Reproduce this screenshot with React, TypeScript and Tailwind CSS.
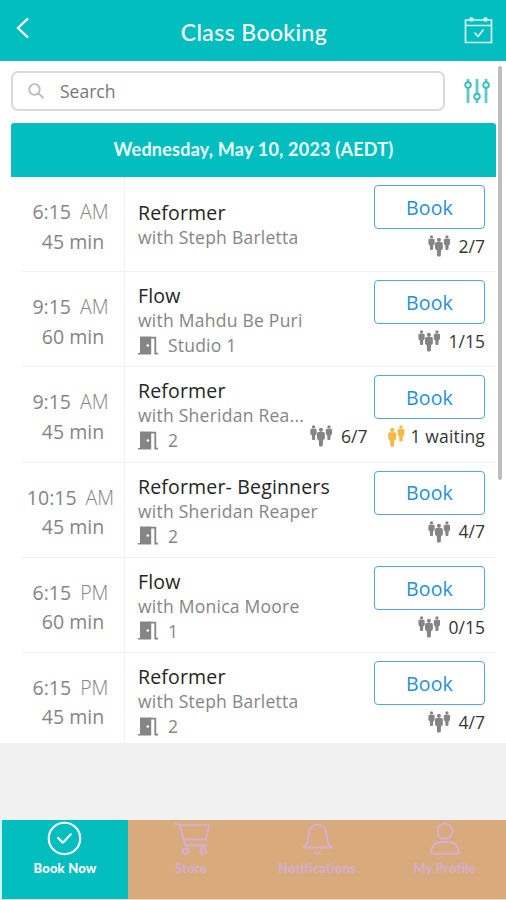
type ClassItem = {
    time: string;
    period: string;
    length: string;
    name: string;
    teacher: string;
    room?: string;
    count: string;
    waiting?: string;
};

const classes: ClassItem[] = [
    { time: "6:15", period: "AM", length: "45 min", name: "Reformer", teacher: "with Steph Barletta", count: "2/7" },
    { time: "9:15", period: "AM", length: "60 min", name: "Flow", teacher: "with Mahdu Be Puri", room: "Studio 1", count: "1/15" },
    { time: "9:15", period: "AM", length: "45 min", name: "Reformer", teacher: "with Sheridan Rea...", room: "2", count: "6/7", waiting: "1 waiting" },
    { time: "10:15", period: "AM", length: "45 min", name: "Reformer- Beginners", teacher: "with Sheridan Reaper", room: "2", count: "4/7" },
    { time: "6:15", period: "PM", length: "60 min", name: "Flow", teacher: "with Monica Moore", room: "1", count: "0/15" },
    { time: "6:15", period: "PM", length: "45 min", name: "Reformer", teacher: "with Steph Barletta", room: "2", count: "4/7" },
];

const Person = ({ x, y, s }: { x: number; y: number; s: number }) => (
    <g transform={`translate(${x} ${y}) scale(${s})`}>
        <circle cx="4" cy="2.1" r="2.1" />
        <path d="M1.5 4.4h5Q8 4.4 8 6v4.6q0 1-.8 1.4l-1 .8-.3 5.2q-.1 1-.9 1H3q-.8 0-.9-1l-.3-5.2-1-.8Q0 11.6 0 10.6V6Q0 4.4 1.5 4.4Z" />
    </g>
);

const PeopleIcon = () => (
    <svg width="23" height="22" viewBox="0 0 23 22" fill="#858585" className="shrink-0">
        <Person x={0.4} y={0.3} s={0.78} />
        <Person x={15.8} y={0.3} s={0.78} />
        <Person x={7} y={2.8} s={0.98} />
    </svg>
);

const WaitingIcon = () => (
    <svg width="17" height="22" viewBox="0 0 17 22" fill="#f5b945" className="shrink-0">
        <Person x={9.6} y={0.3} s={0.85} />
        <Person x={0.2} y={2.8} s={1} />
    </svg>
);

const DoorIcon = () => (
    <svg width="20" height="19" viewBox="0 0 20 19" fill="none" className="shrink-0">
        <path d="M2 0.5h11.2v18H0V17h2Z" fill="#858585" />
        <path d="M13 1.7h4.3v16H20" stroke="#858585" strokeWidth="1.8" />
        <circle cx="9.8" cy="9.5" r="1.3" fill="#fff" />
    </svg>
);

const ClassRow = ({ item }: { item: ClassItem }) => (
    <div className="ml-[22px] mr-[10px] flex h-[95.2px] shrink-0 border-b border-[#efefef]">
        <div className="flex w-[103px] shrink-0 flex-col items-center border-r border-[#f0f3f3] pt-5 text-[19.5px] leading-[29.5px] text-[#858585]">
            <p className="flex gap-[9px] pr-[5px]">
                <span>{item.time}</span>
                <span className="font-light">{item.period}</span>
            </p>
            <p>{item.length}</p>
        </div>
        <div className="flex w-[236px] shrink-0 flex-col justify-center pt-[2px] pl-[13px] whitespace-nowrap">
            <h3 className="text-[19.5px] leading-[25px] tracking-[0.17px] text-[#252525]">{item.name}</h3>
            <p className="text-[17.5px] leading-[25px] tracking-[0.25px] text-[#858585]">{item.teacher}</p>
            {item.room && (
                <p className="flex items-center gap-[10px] text-[17.5px] leading-[24px] tracking-[0.2px] text-[#858585]">
                    <DoorIcon />
                    {item.room}
                </p>
            )}
        </div>
        <div className="ml-auto mr-[11px] flex w-[111px] shrink-0 flex-col items-end pt-2">
            <button className="h-[44px] w-[111px] shrink-0 rounded-[4px] border-[1.5px] border-[#55a4e4] pt-px text-[19.5px] tracking-[0.2px] text-[#268fdc]">
                Book
            </button>
            <div className="flex h-[34px] items-center gap-[20px] whitespace-nowrap text-[17.5px] text-[#353535]">
                <span className="flex items-center gap-[8px]"><PeopleIcon />{item.count}</span>
                {item.waiting && (
                    <span className="flex items-center gap-[6px] tracking-[0.15px]"><WaitingIcon />{item.waiting}</span>
                )}
            </div>
        </div>
    </div>
);

const iconProps = {
    width: 38,
    height: 38,
    viewBox: "0 0 36 36",
    fill: "none",
    stroke: "currentColor",
    strokeWidth: 2,
    strokeLinecap: "round" as const,
    strokeLinejoin: "round" as const,
};

const BottomNav = () => (
    <nav className="mt-auto grid h-[80px] grid-cols-[128px_126px_126px_126px] border-b border-[#ecd5c4] bg-[#d8aa7c] font-[Lato,sans-serif] text-[13px] leading-[18px] font-black tracking-[0.2px] text-[#d5afcd]">
        <a className="flex flex-col items-center gap-px border-l-2 border-[#d5f2f1] bg-[#03bebe] text-white">
            <svg {...iconProps}>
                <circle cx="17.5" cy="17.5" r="14.9" />
                <path d="m11.5 17 4.5 4.5 7.5-8" />
            </svg>
            Book Now
        </a>
        <a className="flex flex-col items-center gap-px">
            <svg {...iconProps}>
                <path d="M2.5 3.5H7L12.500 24h20M8 5h27L32 18.5H11.5" />
                <circle cx="13" cy="29.5" r="2.6" />
                <circle cx="29.5" cy="29.5" r="2.6" />
            </svg>
            Store
        </a>
        <a className="flex flex-col items-center gap-px">
            <svg {...iconProps}>
                <path d="M18.5 4.5c-6 0-8.500 4.500-8.500 10 0 6-1.500 8.500-4.500 11.500h26C28.500 23 27 20.500 27 14.500c0-5.500-2.500-10-8.500-10ZM16 30c.8 2.200 4.200 2.200 5 0" />
            </svg>
            Notifications
        </a>
        <a className="flex flex-col items-center gap-px pl-[3px]">
            <svg {...iconProps}>
                <circle cx="18" cy="10.5" r="7.2" />
                <path d="M5 32v-1.500c0-5.500 4-9.500 8.500-9.500h9c4.500 0 8.500 4 8.500 9.500V32Z" />
            </svg>
            My Profile
        </a>
    </nav>
);

export default function App() {
    return (
        <div className="flex h-[900px] w-[506px] flex-col overflow-hidden bg-[#f1f1f1] font-['Open_Sans','Noto_Sans',sans-serif]">
            <header className="flex h-[61px] shrink-0 items-center justify-between bg-[#03bebe] pr-[13px] pl-[15px] text-white">
                <svg width="29" height="22" viewBox="0 0 29 22" fill="none" stroke="white" strokeWidth="2.3" className="-mt-[5px]">
                    <path d="M13 1.5 3 11l10 9.5" />
                </svg>
                <h1 className="pt-[3px] font-[Lato,sans-serif] text-[23px] font-medium tracking-[0.4px]">Class Booking</h1>
                <svg width="29" height="28" viewBox="0 0 29 28" fill="none" stroke="#d5f4f3" strokeWidth="1.7" className="-mt-px">
                    <path d="M1.5 4h26v22.5h-26ZM1.5 9.5h26" />
                    <path d="m10.5 16.500 3.500 4 5.500-7" />
                    <circle cx="7.5" cy="3.5" r="1.5" fill="#d5f4f3" />
                    <circle cx="21.5" cy="3.5" r="1.5" fill="#d5f4f3" />
                </svg>
            </header>
            <main className="relative flex h-[682px] shrink-0 flex-col overflow-hidden bg-white">
                <div className="flex items-center pt-[10px] pl-[11px]">
                    <div className="flex h-[40px] w-[434px] items-center gap-[16px] rounded-[7px] border-2 border-[#dadada] pl-[15px] text-[17.5px] text-[#777]">
                        <svg width="16" height="16" viewBox="0 0 16 16" fill="none" stroke="#bdbdbd" strokeWidth="1.8">
                            <circle cx="6.5" cy="6.5" r="5.3" />
                            <path d="m10.5 10.5 5 4.5" />
                        </svg>
                        Search
                    </div>
                    <svg width="26" height="26" viewBox="0 0 26 26" fill="none" stroke="#3bbcbe" strokeWidth="1.9" className="ml-[19px]">
                        <path d="M4 1v3M4 10v15M13 1v14M13 21v4M22 1v3M22 10v15" stroke="#5fc8c8" strokeWidth="2.8" />
                        <circle cx="4" cy="7" r="2.8" />
                        <circle cx="13" cy="18.5" r="2.8" />
                        <circle cx="22" cy="7" r="2.8" />
                    </svg>
                </div>
                <div className="mt-[12px] mr-[10px] ml-[11px] flex h-[54px] shrink-0 items-center justify-center rounded-t-[3px] bg-[#03bebe] pb-px font-[Lato,sans-serif] text-[18px] font-bold tracking-[0.22px] text-[#edffff]">
                    Wednesday, May 10, 2023 (AEDT)
                </div>
                {classes.map((item, i) => (
                    <ClassRow key={i} item={item} />
                ))}
                <div className="absolute top-[5px] right-[4px] h-[414px] w-[4px] rounded-full bg-[#bdbdbd]" />
            </main>
            <BottomNav />
        </div>
    );
}
